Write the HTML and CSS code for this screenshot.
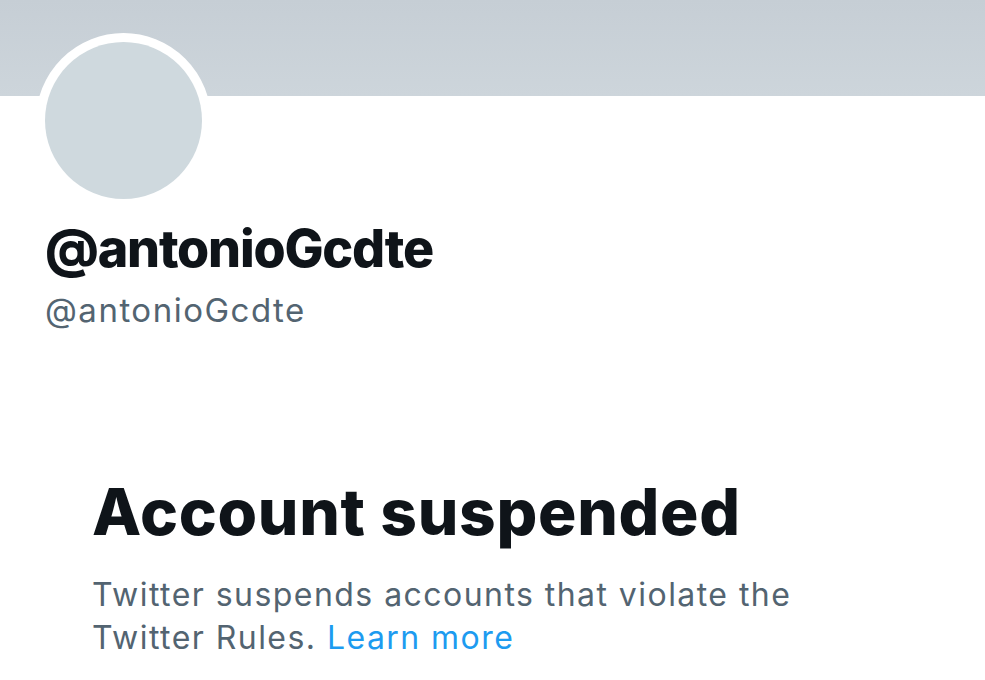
FILE: index.html
```html
<!DOCTYPE html>
<html lang="en">
<head>
<meta charset="utf-8">
<title>Account suspended</title>
<link rel="stylesheet" href="styles.css">
</head>
<body>
<div class="page">
  <div class="banner"></div>
  <div class="profile">
    <div class="avatar-ring"><div class="avatar"></div></div>
    <div class="name">@antonioGcdte</div>
    <div class="handle">@antonioGcdte</div>
  </div>
  <div class="notice">
    <h1 class="notice-title">Account suspended</h1>
    <p class="notice-text">Twitter suspends accounts that violate the Twitter Rules. <a class="link" href="#">Learn more</a></p>
  </div>
</div>
</body>
</html>
```

FILE: styles.css
```css
html, body {
  margin: 0;
  padding: 0;
  background: #ffffff;
}
body {
  font-family: Inter, "Liberation Sans", Arial, sans-serif;
  color: #0f1419;
}
.page {
  width: 985px;
  height: 680px;
  overflow: hidden;
  display: flex;
  flex-direction: column;
}
.banner {
  height: 96px;
  background: linear-gradient(180deg, #c6ced5 0%, #cdd5db 100%);
  flex: none;
}
.profile {
  display: flex;
  flex-direction: column;
  padding-left: 45px;
}
.avatar-ring {
  width: 157px;
  height: 157px;
  border-radius: 50%;
  border: 9px solid #ffffff;
  margin-left: -9px;
  margin-top: -63px;
  background: #ffffff;
}
.avatar {
  width: 100%;
  height: 100%;
  border-radius: 50%;
  background: #cfd9de;
}
.name {
  margin-top: 10px;
  font-size: 52px;
  font-weight: 800;
  line-height: 62px;
  letter-spacing: -1.2px;
}
.handle {
  margin-top: 10px;
  font-size: 33px;
  line-height: 40px;
  letter-spacing: 1.5px;
  color: #536471;
}
.notice {
  padding-left: 92px;
  margin-top: 144px;
}
.notice-title {
  margin: 0;
  font-size: 64px;
  font-weight: 800;
  line-height: 76px;
  letter-spacing: 0.7px;
}
.notice-text {
  margin: 23px 0 0 0;
  width: 740px;
  font-size: 32px;
  line-height: 43px;
  letter-spacing: 1.45px;
  color: #536471;
}
.link {
  color: #1d9bf0;
  text-decoration: none;
}
```
